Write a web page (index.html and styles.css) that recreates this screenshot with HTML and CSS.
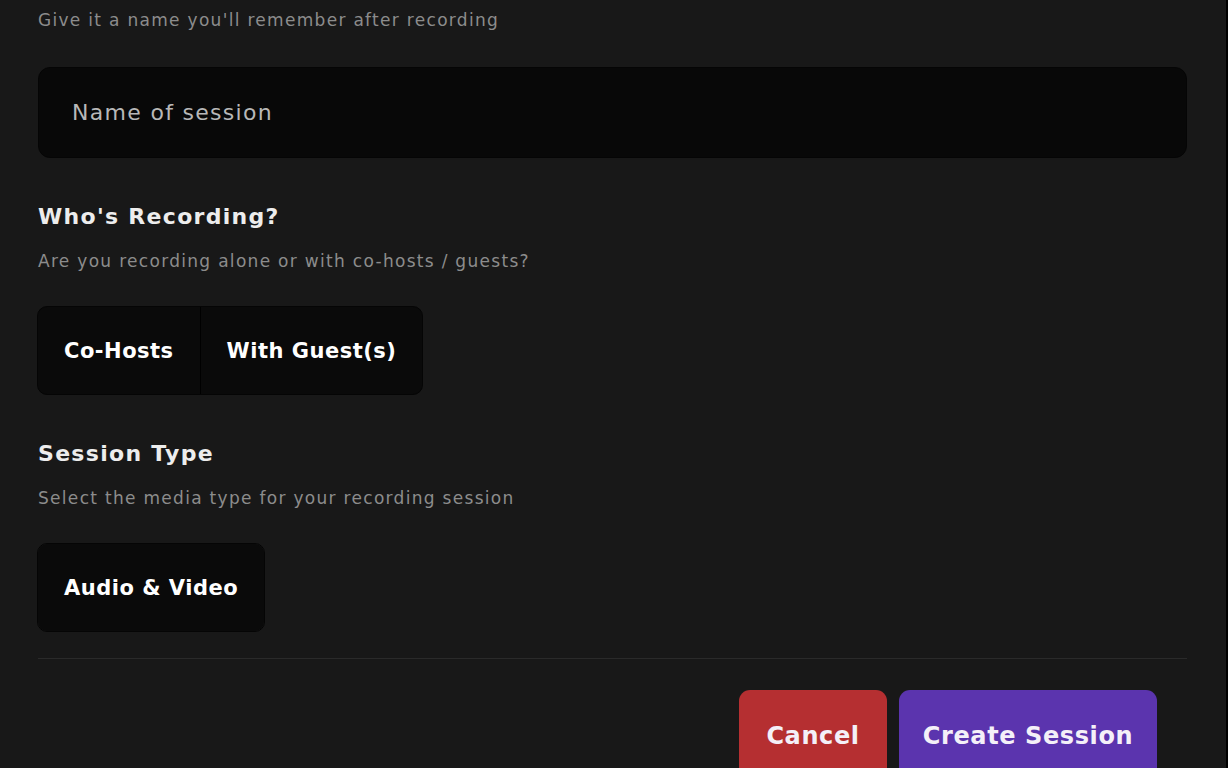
FILE: index.html
```html
<!DOCTYPE html>
<html lang="en">
<head>
<meta charset="utf-8">
<title>Create Session</title>
<link rel="stylesheet" href="styles.css">
</head>
<body>
<div class="panel">
  <p class="hint first">Give it a name you'll remember after recording</p>
  <div class="input"><span class="placeholder">Name of session</span></div>

  <h2 class="heading">Who's Recording?</h2>
  <p class="hint">Are you recording alone or with co-hosts / guests?</p>
  <div class="group">
    <button class="opt">Co-Hosts</button>
    <button class="opt">With Guest(s)</button>
  </div>

  <h2 class="heading">Session Type</h2>
  <p class="hint">Select the media type for your recording session</p>
  <div class="group">
    <button class="opt">Audio &amp; Video</button>
  </div>

  <div class="divider"></div>
  <div class="footer">
    <button class="btn cancel">Cancel</button>
    <button class="btn create">Create Session</button>
  </div>
</div>
</body>
</html>
```
FILE: styles.css
```css
html, body {
  margin: 0;
  padding: 0;
  background: #000;
  height: 100%;
  overflow: hidden;
}
.panel {
  width: 1226px;
  height: 768px;
  box-sizing: border-box;
  background: #181818;
  padding: 8px 39px 0 38px;
  font-family: "DejaVu Sans", "Open Sans", sans-serif;
  color: #f2f2f2;
}
.hint {
  margin: 0;
  font-size: 17px;
  line-height: 24px;
  letter-spacing: 1.3px;
  color: #8c8c8c;
}
.input {
  margin-top: 35px;
  height: 91px;
  box-sizing: border-box;
  background: #080808;
  border: 1px solid #050505;
  border-radius: 12px;
  display: flex;
  align-items: center;
  padding-left: 33px;
}
.placeholder {
  font-size: 22px;
  letter-spacing: 1.3px;
  color: #b8b8b8;
}
.heading {
  margin: 44px 0 0;
  font-size: 22px;
  line-height: 30px;
  letter-spacing: 1.3px;
  font-weight: 700;
  color: #ededed;
}
.heading + .hint {
  margin-top: 17px;
}
.group {
  margin-top: 33px;
  display: inline-flex;
  height: 89px;
  box-sizing: border-box;
  border: 1px solid #050505;
  border-radius: 10px;
  overflow: hidden;
  background: #0a0a0a;
  margin-left: -1px;
}
.opt {
  background: #0a0a0a;
  border: none;
  border-right: 1px solid #000;
  color: #fff;
  font-family: inherit;
  font-size: 21px;
  font-weight: 700;
  letter-spacing: 0.5px;
  padding: 0 26px;
  height: 100%;
}
.opt:last-child {
  border-right: none;
}
.divider {
  margin-top: 26px;
  height: 1px;
  background: #2a2a2a;
}
.footer {
  margin-top: 31px;
  display: flex;
  justify-content: flex-end;
  gap: 12px;
  padding-right: 30px;
}
.btn {
  height: 92px;
  border: none;
  border-radius: 11px;
  color: #f4f0f8;
  font-family: inherit;
  font-size: 24px;
  font-weight: 700;
  letter-spacing: 0.6px;
  padding: 0;
}
.cancel {
  background: #b52f31;
  width: 148px;
}
.create {
  background: #5b34ae;
  width: 258px;
}
```
